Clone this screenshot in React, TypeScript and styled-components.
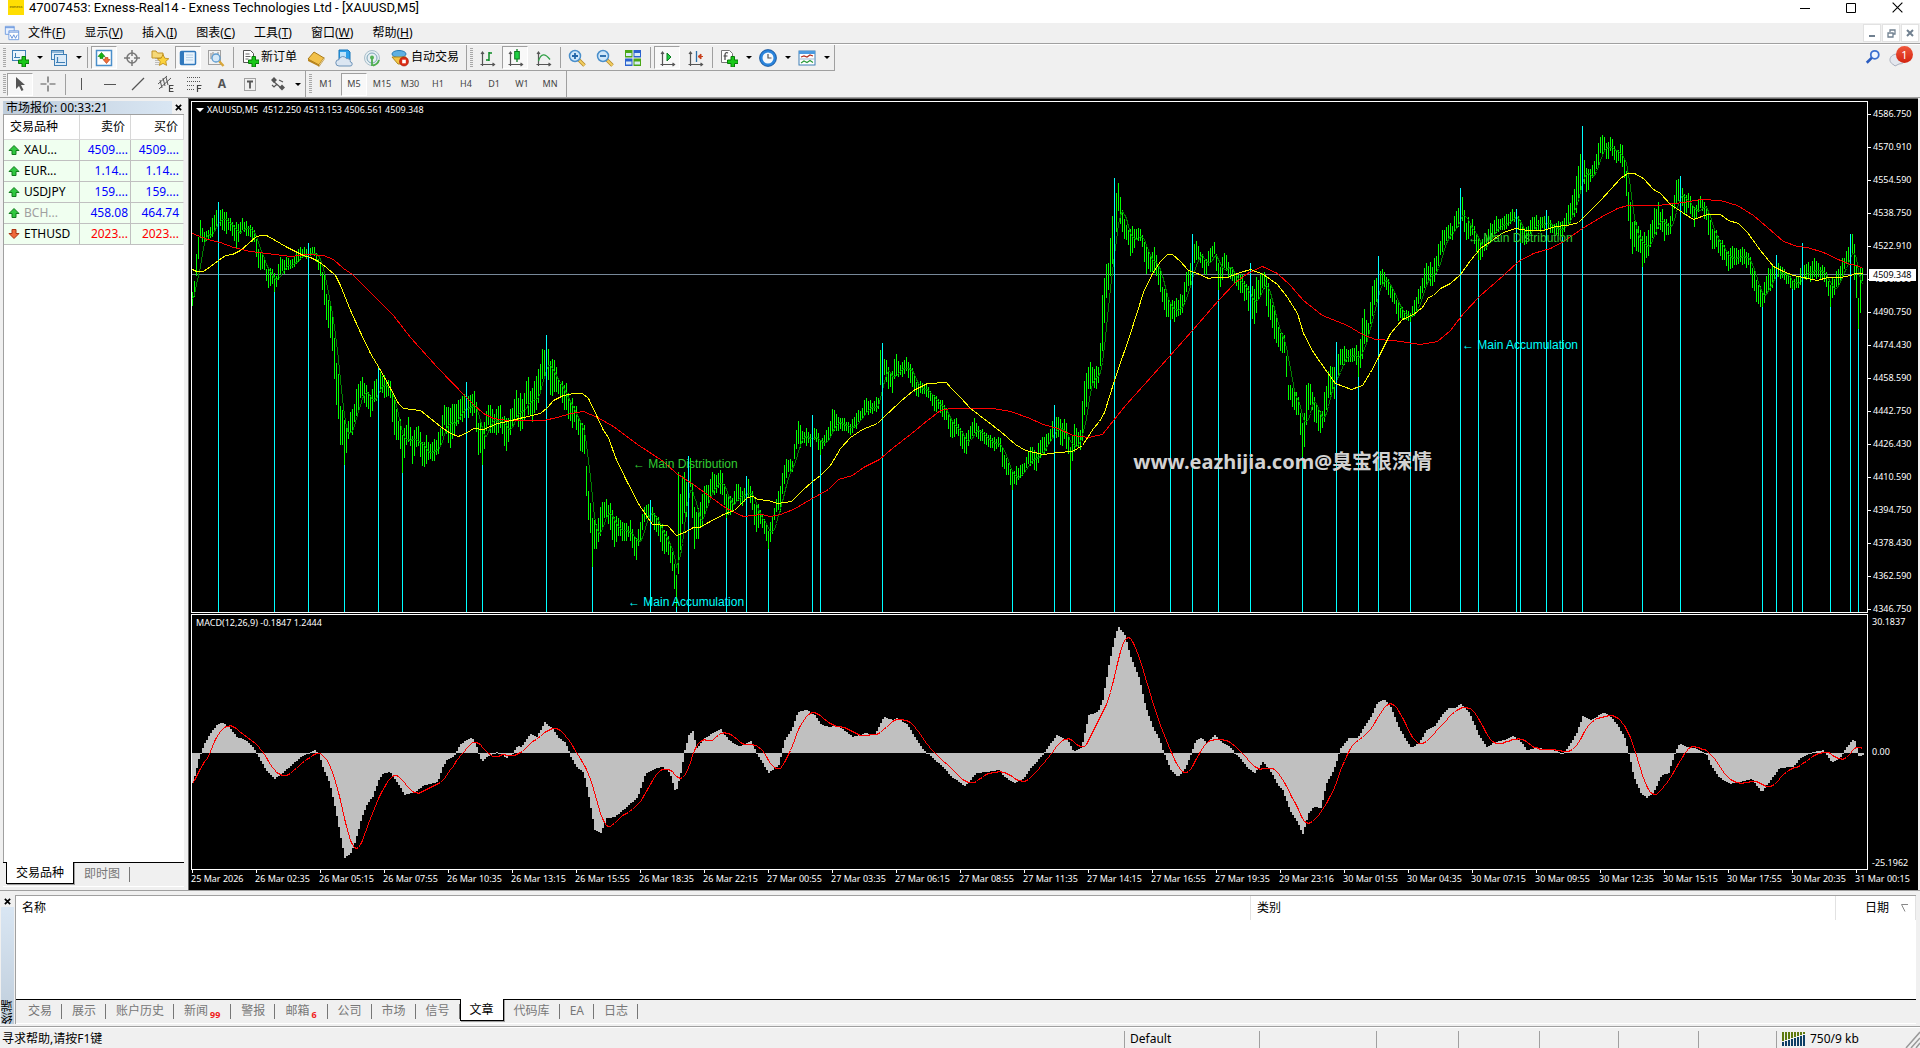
import React from 'react';
import styled, { createGlobalStyle, css } from 'styled-components';

const GlobalStyle = createGlobalStyle`
  *, *::before, *::after { box-sizing: border-box; }
  body { margin: 0; background: #f0f0f0; }
  button { font: inherit; color: inherit; background: none; border: 0; padding: 0; margin: 0; cursor: default; }
  ul, ol { list-style: none; margin: 0; padding: 0; }
  svg { display: block; }
`;

const UI_FONT = '"Noto Sans", "Noto Sans CJK SC", sans-serif';

/* ---------- chart data ---------- */

type Point = [number, number];
type Range = [number, number, number];

const parse = (size: number) => (text: string): number[][] => {
  const n = text.trim().split(/[\s,]+/).map(Number);
  const rows: number[][] = [];
  for (let i = 0; i < n.length; i += size) rows.push(n.slice(i, i + size));
  return rows;
};
const points = (t: string) => parse(2)(t) as Point[];
const ranges = (t: string) => parse(3)(t) as Range[];

const PRICE_RANGES = ranges(`
193,292,304 196,250,277 200,219,243 204,230,242 209,230,238 214,212,237 218,202,225 224,210,237 230,215,232 236,223,247
241,218,230 247,222,235 254,229,242 258,247,268 264,255,272 267,270,290 272,265,285 276,275,285 280,255,275 286,258,272
293,257,268 298,248,260 303,247,257 308,250,260 311,246,255 315,248,257 320,262,278 324,273,308 328,295,335 332,308,358
336,355,418 340,395,448 344,418,465 348,413,442 353,408,433 357,380,410 362,373,400 367,388,412 371,393,420 375,375,402
379,367,393 385,375,397 390,380,403 394,400,437 398,413,447 402,422,473 408,417,443 412,427,462 418,422,447 422,432,469
428,437,460 433,442,465 440,423,450 444,400,428 450,407,450 456,398,425 461,398,422 466,393,418 470,393,417 474,392,415
478,412,453 482,427,465 487,403,427 493,407,437 500,405,432 506,417,457 511,408,433 516,390,422 522,392,440 526,373,407
530,380,422 535,380,423 540,355,395 544,342,377 546,335,375 550,357,395 554,357,402 560,382,398 566,378,415 570,397,425
576,402,428 579,412,447 584,417,457 587,477,522 591,507,548 593,513,567 597,517,543 602,500,530 605,493,520 610,503,530
614,517,547 619,517,540 625,522,540 631,520,543 635,533,567 640,517,540 645,503,520 650,503,520 655,513,532 662,520,552
668,535,555 672,543,577 676,567,607 678,470,593 682,467,527 686,473,517 690,457,490 694,507,553 698,507,540 702,490,527
706,483,507 712,472,497 718,472,488 722,468,497 726,493,518 732,497,512 737,482,503 742,490,507 747,478,497 752,487,513
755,500,533 760,508,525 764,515,532 768,530,549 771,517,540 775,500,517 780,485,510 783,463,493 787,457,473 792,460,473
795,427,460 798,417,450 803,430,445 808,428,447 812,433,445 815,427,440 820,437,455 827,428,442 833,405,432 838,418,430
844,418,430 850,422,433 856,412,427 862,407,418 865,398,413 872,402,413 878,393,413 880,347,390 882,343,383 885,357,377
889,370,390 892,368,392 895,348,377 900,363,377 906,357,372 911,365,387 916,378,400 921,383,393 927,383,398 933,392,410
940,397,412 946,405,423 951,420,438 956,417,433 962,430,450 966,433,457 970,425,440 974,418,433 980,428,440 987,432,445
993,437,450 999,437,447 1003,445,473 1008,463,477 1012,470,490 1017,465,483 1023,465,473 1029,445,463 1036,450,472
1041,433,457 1047,433,448 1052,418,440 1056,412,437 1060,417,443 1065,413,447 1070,442,470 1075,420,447 1080,430,455
1083,380,433 1086,368,407 1089,354,387 1094,368,392 1099,363,382 1102,293,350 1105,262,313 1108,260,293 1111,223,273
1114,187,247 1118,183,217 1122,210,238 1126,220,240 1130,228,255 1136,225,243 1141,230,240 1145,245,273 1150,248,273
1156,248,277 1161,277,300 1165,292,320 1170,300,317 1176,297,322 1182,293,313 1186,270,293 1191,262,283 1194,237,267
1199,247,260 1205,260,278 1209,245,265 1214,240,257 1219,267,290 1224,247,273 1230,265,278 1237,273,287 1243,273,297
1248,287,310 1253,283,333 1258,273,303 1263,267,283 1268,283,320 1274,307,340 1278,327,350 1284,332,357 1288,380,400
1294,387,410 1298,397,417 1303,427,457 1307,367,417 1310,377,413 1315,397,423 1321,413,437 1326,377,410 1331,363,390
1335,357,400 1340,345,367 1347,347,363 1354,347,360 1359,343,377 1363,297,357 1368,320,337 1372,283,317 1377,273,297
1381,267,283 1387,278,293 1393,287,303 1398,303,320 1404,310,318 1410,312,322 1416,293,313 1421,282,300 1426,260,283
1431,263,287 1436,253,277 1440,235,260 1446,223,243 1452,223,238 1457,207,228 1461,188,222 1465,217,243 1472,220,237
1478,237,260 1484,237,253 1490,222,242 1495,217,237 1503,215,230 1511,209,223 1516,210,223 1521,223,243 1527,227,245
1532,213,230 1540,218,230 1546,212,228 1552,222,233 1562,222,237 1568,200,227 1573,195,217 1578,160,207 1580,142,190
1583,150,180 1586,160,200 1590,167,180 1596,153,170 1600,133,157 1603,133,153 1607,143,162 1610,132,153 1616,148,163
1622,140,167 1626,167,200 1629,193,230 1632,220,258 1637,213,248 1642,233,267 1648,230,255 1653,208,240 1658,203,230
1664,213,242 1669,220,237 1673,193,217 1677,177,200 1680,180,207 1684,193,213 1689,193,210 1694,207,227 1700,192,210
1706,203,222 1711,220,252 1716,230,247 1722,240,262 1728,247,270 1734,247,265 1741,247,263 1748,253,267 1751,260,283
1756,280,303 1762,288,307 1768,267,293 1774,267,283 1779,262,277 1786,270,282 1792,278,289 1798,277,288 1802,260,280
1808,263,280 1814,257,283 1820,265,277 1825,265,283 1830,283,307 1835,273,290 1840,263,283 1844,253,273 1850,235,260
1852,233,257 1856,257,300 1858,293,327 1860,267,313 1862,267,280`);

const SLOW_MA = points(`
192,233 207,239 220,242 233,247 250,251 267,253 290,256 307,254 323,255 333,259 343,268 352,274 370,292 393,315 410,337
437,367 466,397 473,404 483,413 493,418 507,420 543,420 557,417 570,413 583,411 597,417 613,426 637,444 663,461 676,473
693,484 708,495 726,508 743,516 761,514 770,516 780,514 793,509 810,499 828,489 838,479 852,475 863,467 879,459 893,447
910,434 927,420 940,410 950,408 993,408 1010,411 1027,417 1043,424 1057,428 1073,435 1088,437 1102,434 1113,420 1125,405
1152,375 1192,330 1218,300 1235,282 1247,273 1262,266 1277,273 1290,285 1303,300 1322,315 1347,325 1362,334 1375,339
1393,340 1420,344 1437,341 1450,330 1463,313 1480,295 1503,275 1518,261 1533,253 1550,248 1563,241 1582,228 1600,217
1617,208 1627,205 1657,205 1683,202 1700,199 1720,200 1737,205 1753,215 1767,227 1783,241 1797,246 1807,247 1823,252
1840,260 1850,264 1857,265 1862,268`);

const MID_MA = points(`
192,269 196,271 203,271 210,266 218,260 225,255 232,254 240,250 248,243 256,236 262,235 266,235 275,240 285,246 293,250
303,255 310,257 318,261 326,267 335,275 340,285 350,310 360,332 370,353 379,368 390,388 398,403 403,408 420,410 430,418
440,426 450,433 458,436 467,432 473,428 483,429 497,423 507,421 523,417 540,413 547,407 553,400 563,395 573,393 582,393
588,398 597,417 603,430 608,437 615,457 626,480 639,505 652,524 667,525 676,535 684,532 693,527 699,527 708,522 723,514
734,510 741,503 747,497 753,496 757,499 768,500 777,503 791,501 802,490 812,481 820,475 830,465 840,448 850,437 862,429
877,423 883,417 900,401 913,390 927,383 946,382 950,387 960,397 970,408 987,421 1000,431 1015,444 1025,450 1043,454
1057,452 1072,451 1082,445 1093,428 1099,421 1104,412 1115,377 1130,333 1143,292 1152,273 1160,261 1167,254 1172,254
1180,261 1188,270 1197,273 1208,278 1213,277 1227,277 1240,272 1250,269 1263,274 1277,284 1287,297 1297,313 1303,333
1313,352 1327,372 1335,383 1351,389 1362,385 1370,372 1378,357 1390,333 1402,319 1413,314 1422,307 1428,297 1433,295
1440,288 1450,283 1460,274 1470,260 1480,248 1493,239 1503,232 1515,228 1527,230 1543,230 1555,226 1567,225 1578,222
1588,212 1600,200 1610,189 1620,178 1627,173 1634,173 1643,178 1653,189 1660,193 1670,204 1682,212 1693,219 1707,214
1720,214 1728,220 1738,223 1747,232 1760,250 1773,266 1783,271 1793,275 1817,280 1827,277 1840,277 1850,275 1855,273
1862,273`);

const SIGNAL_STEMS = points(`
218,202 274,292 308,243 344,465 378,367 402,473 466,382 482,465 546,335 592,567 650,500 676,607 688,456 726,518 746,476
768,549 812,415 820,455 882,343 1012,490 1054,405 1070,470 1114,178 1170,320 1192,234 1218,290 1250,263 1302,457 1336,342
1358,377 1378,256 1410,322 1460,188 1478,260 1516,209 1520,243 1546,210 1562,237 1582,126 1642,267 1680,176 1762,307
1776,255 1792,289 1802,243 1830,307 1850,234 1858,329`);

const MACD = points(`
192,783 196,768 199,755 203,745 207,738 211,731 217,724 221,722 229,728 236,737 245,740 252,747 258,757 265,770 274,779
283,772 291,765 300,757 309,752 314,750 318,753 322,767 329,783 335,810 341,843 344,858 350,853 355,840 361,817 367,803
372,797 378,780 382,774 389,772 395,780 404,795 414,792 422,786 437,782 442,767 446,760 453,757 459,745 466,740 471,737
476,747 481,762 486,757 497,752 506,758 512,753 517,745 521,747 529,734 536,737 544,722 552,729 558,738 565,743 570,757
576,767 583,773 588,797 594,830 600,833 606,818 614,817 626,807 637,797 645,773 656,768 662,767 669,773 675,793 680,773
684,750 688,735 692,731 696,748 704,738 712,733 720,729 728,740 739,747 750,741 758,757 768,773 778,765 784,740 791,730
797,712 806,710 814,715 821,725 830,727 834,725 843,730 852,737 865,733 874,735 883,717 892,720 897,718 907,725 914,737
923,750 931,757 942,767 951,777 964,786 976,773 987,772 998,770 1004,777 1013,783 1023,778 1031,767 1042,755 1051,742
1056,735 1067,740 1073,752 1081,747 1088,715 1097,712 1102,700 1108,665 1115,633 1118,627 1124,635 1130,657 1139,680
1145,707 1152,727 1159,740 1163,753 1170,770 1177,777 1185,768 1191,752 1195,740 1201,738 1206,743 1214,735 1222,743
1229,747 1238,757 1247,768 1254,773 1262,762 1271,773 1277,785 1282,790 1289,810 1297,823 1302,834 1308,813 1313,807
1320,808 1326,783 1333,770 1340,748 1348,738 1357,738 1363,727 1370,717 1377,702 1383,699 1390,707 1398,727 1404,738
1411,748 1419,742 1426,730 1433,727 1441,715 1448,708 1454,708 1460,704 1468,712 1473,723 1479,737 1486,747 1494,742
1503,740 1513,736 1521,743 1526,750 1536,748 1547,749 1558,752 1562,754 1569,745 1576,733 1582,716 1591,720 1603,712
1611,718 1618,727 1624,738 1629,757 1633,777 1640,793 1646,798 1653,792 1661,775 1668,773 1674,753 1679,743 1686,747
1695,748 1705,753 1710,765 1718,777 1729,784 1740,782 1751,779 1761,792 1770,780 1779,768 1792,767 1801,757 1812,752
1823,750 1831,762 1839,759 1845,748 1852,740 1855,742 1858,756 1863,755`);

const noise = (i: number, salt: number) => {
  const v = Math.sin(i * 12.9898 + salt * 78.233) * 43758.5453;
  return v - Math.floor(v);
};

const sample = (rows: number[][], x: number, col: number) => {
  if (x <= rows[0][0]) return rows[0][col];
  for (let i = 1; i < rows.length; i++) {
    if (x <= rows[i][0]) {
      const a = rows[i - 1];
      const b = rows[i];
      return a[col] + ((b[col] - a[col]) * (x - a[0])) / (b[0] - a[0]);
    }
  }
  return rows[rows.length - 1][col];
};

const BAR_XS = Array.from({ length: 836 }, (_, i) => 192 + i * 2);
const STEM_TOPS = new Map(SIGNAL_STEMS);

const bars = BAR_XS.map((x, i) => {
  const hi = sample(PRICE_RANGES, x, 1);
  const lo = sample(PRICE_RANGES, x, 2);
  const span = lo - hi;
  const top = Math.round(hi - 1 + noise(i, 1) * span * 0.3);
  const low = Math.round(lo + 2 - noise(i, 2) * span * 0.3);
  return { x, top, bottom: Math.max(low, STEM_TOPS.get(x) ?? 0) };
});

const barsPath = bars.map(b => `M${b.x + 0.5} ${b.top}V${b.bottom}`).join('');
const fastLine = bars
  .map((b, i) => {
    const from = Math.max(0, i - 4);
    const part = bars.slice(from, i + 1);
    const avg = part.reduce((s, p) => s + (p.top + p.bottom) / 2, 0) / part.length;
    return `${b.x + 0.5},${Math.round(avg) + 0.5}`;
  })
  .join(' ');

const ZERO_Y = 753;
const macdValues = BAR_XS.map(x => Math.round(sample(MACD, x, 1)));
const macdPath = BAR_XS.map((x, i) => `M${x} ${ZERO_Y}h2V${macdValues[i] === ZERO_Y ? ZERO_Y + 1 : macdValues[i]}h-2z`).join('');
const macdSignal = BAR_XS.map((x, i) => {
  const part = macdValues.slice(Math.max(0, i - 8), i + 1);
  return `${x + 0.5},${Math.round(part.reduce((s, v) => s + v, 0) / part.length) + 0.5}`;
}).join(' ');

const toPolyline = (list: Point[]) => list.map(([x, y]) => `${x + 0.5},${y + 0.5}`).join(' ');

const PRICES = ['4586.750', '4570.910', '4554.590', '4538.750', '4522.910', '4506.590', '4490.750', '4474.430',
  '4458.590', '4442.750', '4426.430', '4410.590', '4394.750', '4378.430', '4362.590', '4346.750'];
const TIMES = ['25 Mar 2026', '26 Mar 02:35', '26 Mar 05:15', '26 Mar 07:55', '26 Mar 10:35', '26 Mar 13:15',
  '26 Mar 15:55', '26 Mar 18:35', '26 Mar 22:15', '27 Mar 00:55', '27 Mar 03:35', '27 Mar 06:15', '27 Mar 08:55',
  '27 Mar 11:35', '27 Mar 14:15', '27 Mar 16:55', '27 Mar 19:35', '29 Mar 23:16', '30 Mar 01:55', '30 Mar 04:35',
  '30 Mar 07:15', '30 Mar 09:55', '30 Mar 12:35', '30 Mar 15:15', '30 Mar 17:55', '30 Mar 20:35', '31 Mar 00:15'];

/* ---------- icons ---------- */

const Svg = ({ s = 18, children }: { s?: number; children: React.ReactNode }) => (
  <svg width={s} height={s} viewBox="0 0 18 18" fill="none" aria-hidden="true">{children}</svg>
);
const Plus = () => <path d="M11 7.500h3.500v3.500h3.500v3.500h-3.500v3.500h-3.500v-3.500h-3.500v-3.500h3.500z" fill="#18c818" stroke="#0a7a0a" />;
const Axes = () => (
  <path d="M4.500 3v14M2.500 15.500h14M3 5l1.500-2L6 5M14.500 14l2 1.500-2 1.500" stroke="#555" strokeWidth="1.200" />
);
const Lens = ({ sign }: { sign: string }) => (
  <>
    <path d="M10.500 10.500l6 6" stroke="#b5892a" strokeWidth="3.500" />
    <path d="M10.500 10.500l6 6" stroke="#f3cf62" strokeWidth="1.800" />
    <circle cx="7" cy="7" r="5.500" fill="#cfe7fa" stroke="#4a8fcb" strokeWidth="1.500" />
    <path d={sign} stroke="#2266a8" strokeWidth="1.800" />
  </>
);

const icons = {
  newChart: (
    <Svg><rect x="1.500" y="1.500" width="13" height="10" fill="#eaf4fc" stroke="#3f7fb5" /><path d="M4.500 4v5M3 8.500h6" stroke="#3f7fb5" /><Plus /></Svg>
  ),
  profiles: (
    <Svg><rect x="1.500" y="1.500" width="12" height="9" fill="#e3f0fb" stroke="#3f7fb5" /><rect x="4.500" y="5.500" width="12" height="11" fill="#dcebf8" stroke="#3f7fb5" /><path d="M1.500 3h12M7.500 8v6M6 13.500h9" stroke="#3f7fb5" strokeWidth="1.200" /></Svg>
  ),
  market: (
    <Svg><rect x="1.500" y="1.500" width="15" height="15" fill="#fff" stroke="#4a8fcb" strokeWidth="1.500" /><path d="M6.500 3.500l3.500 4h-2v2h-3v-2h-2z" fill="#16b316" stroke="#0a7a0a" strokeWidth=".6" /><path d="M11.500 14.500l3.500-4h-2v-2h-3v2h-2z" fill="#f0703a" stroke="#b53a12" strokeWidth=".6" /></Svg>
  ),
  crosshair: (
    <Svg><circle cx="9" cy="9" r="5" stroke="#777" strokeWidth="1.500" /><path d="M9 1v6M9 11v6M1 9h6M11 9h6" stroke="#777" strokeWidth="1.500" /></Svg>
  ),
  navigator: (
    <Svg><path d="M1 2h4l1.500 2H12v5H1z" fill="#f6d978" stroke="#c09226" /><path d="M5 9v8M7 9v8" stroke="#8a8a8a" strokeDasharray="1 1" /><path d="M12 5.500l1.800 3.700 4 .5-3 2.700.8 4-3.600-2-3.600 2 .8-4-3-2.700 4-.5z" fill="#fbd23c" stroke="#b98613" strokeWidth=".8" /></Svg>
  ),
  terminal: (
    <Svg><rect x="1.500" y="2.500" width="15" height="13" rx="1" fill="#e8f3fc" stroke="#2f78bd" strokeWidth="1.500" /><path d="M3.500 3v12" stroke="#2f78bd" strokeWidth="3" /><path d="M7 6h7M7 8.500h7M7 11h7" stroke="#a9c6df" strokeWidth=".8" /></Svg>
  ),
  tester: (
    <Svg><rect x="1.500" y="1.500" width="12" height="14" fill="#f2f2f2" stroke="#a0a0a0" /><path d="M4 4v6M6 3v5M11 3v4" stroke="#888" /><path d="M12 12l4.500 5" stroke="#d9a73a" strokeWidth="2.500" /><circle cx="9" cy="9" r="4" fill="#d5e8f7" stroke="#5c9bd0" strokeWidth="1.300" /></Svg>
  ),
  order: (
    <Svg><path d="M2.500 1.500h7l3 3v9h-10z" fill="#fff" stroke="#555" /><path d="M4.500 5h4M4.500 7.500h5M4.500 10h3" stroke="#666" /><Plus /></Svg>
  ),
  book: (
    <Svg><path d="M1 10l6-7 10 6-5 7z" fill="#f2c14a" stroke="#a97a18" /><path d="M1 10l11 6v1.500L1 12z" fill="#b9831a" /><path d="M12 15.500l5-7v2l-5 7z" fill="#fff0c0" stroke="#a97a18" strokeWidth=".6" /></Svg>
  ),
  cloud: (
    <Svg><path d="M4 1h9l2 2v8H4z" fill="#2da0ea" stroke="#1674b8" /><path d="M5 3h6v5H5z" fill="#bfe3fa" /><path d="M4 17a3.200 3.200 0 010-6.400 4 4 0 017.400-1 3.200 3.200 0 014 3.400 2 2 0 01-.4 4z" fill="#dbe6f2" stroke="#6d93b8" /></Svg>
  ),
  signal: (
    <Svg><circle cx="9" cy="9" r="7.500" fill="#e6eef2" stroke="#a9bfcb" /><circle cx="9" cy="9" r="5" stroke="#7da5b8" /><circle cx="9" cy="8.500" r="2" fill="#53b153" /><path d="M9 9v8M10 16.500a8 8 0 006-5.500" stroke="#4fae4f" strokeWidth="1.800" /></Svg>
  ),
  auto: (
    <Svg><ellipse cx="8" cy="5" rx="7" ry="3.500" fill="#5fb0e2" stroke="#2a7db5" /><path d="M1 8h14l-3 7H7z" fill="#f3c545" stroke="#b08a1c" /><circle cx="13" cy="12.500" r="4.500" fill="#dd2c14" stroke="#9c1a0a" strokeWidth=".6" /><rect x="11.200" y="10.700" width="3.600" height="3.600" fill="#fff" /></Svg>
  ),
  barChart: <Svg><Axes /><path d="M11 3v9M11 4h3M8 11h3" stroke="#0b8a24" strokeWidth="1.500" /></Svg>,
  candles: <Svg><Axes /><path d="M11 0v13" stroke="#0a7a1e" strokeWidth="1.300" /><rect x="8.700" y="2.500" width="4.600" height="7.500" fill="#1fd043" stroke="#0a7a1e" /></Svg>,
  lineChart: <Svg><Axes /><path d="M4.500 12C7 4 11 4 16 10.500" stroke="#2fa046" strokeWidth="1.300" /></Svg>,
  zoomIn: <Svg><Lens sign="M7 4v6M4 7h6" /></Svg>,
  zoomOut: <Svg><Lens sign="M4 7h6" /></Svg>,
  tiles: (
    <Svg><path d="M1 1h7.500v7.500H1z" fill="#4aa818" /><path d="M9.500 1H17v7.500H9.500z" fill="#2b62cf" /><path d="M1 9.500h7.500V17H1z" fill="#2b62cf" /><path d="M9.500 9.500H17V17H9.500z" fill="#4aa818" /><path d="M2 4h5.500v3H2zM10.500 4H16v3h-5.500zM2 12.500h5.500v3H2zM10.500 12.500H16v3h-5.500z" fill="#dcecf8" /></Svg>
  ),
  autoScroll: <Svg><Axes /><path d="M9 4v8l4-4z" fill="#1fd043" stroke="#0a7a1e" /></Svg>,
  shift: <Svg><Axes /><path d="M10.500 2v11" stroke="#2a6fa8" strokeWidth="1.300" /><path d="M12 7.500l3-2.500v5zM14 7.500h3" fill="#c8401c" stroke="#c8401c" /></Svg>,
  indicators: (
    <Svg><path d="M1.500 1.500h8l3 3v9h-11z" fill="#fff" stroke="#777" /><path d="M8 4c-2-1-3 0-3 2v5M3.500 7h4" stroke="#444" strokeWidth="1.200" /><Plus /></Svg>
  ),
  clock: (
    <Svg><circle cx="9" cy="9" r="7" fill="#f4f8fc" stroke="#2a84dc" strokeWidth="3" /><circle cx="9" cy="9" r="8.400" stroke="#0f4d96" strokeWidth=".8" /><path d="M9 5v4h3.500" stroke="#555" strokeWidth="1.200" /></Svg>
  ),
  templates: (
    <Svg><rect x="1" y="2" width="16" height="14" fill="#fff" stroke="#3f7fb5" /><path d="M1 3.500h16" stroke="#4a9ae0" strokeWidth="3" /><path d="M1 10h16" stroke="#9bb9d3" /><path d="M3 8l3-1 3 1 3-2 3 1" stroke="#b03020" strokeWidth="1.200" /><path d="M3 14l3-2 3 1.500 3-2 3 2" stroke="#2a9a3a" strokeWidth="1.200" /></Svg>
  ),
  cursor: <Svg><path d="M5 2v12l3-3 2.500 5 2-1-2.500-5h4z" fill="#555" /></Svg>,
  cross: <Svg><path d="M9 1.500v6M9 10.500v6M1.500 9h6M10.500 9h6" stroke="#555" strokeWidth="1.200" /></Svg>,
  vline: <Svg><path d="M8.500 3v12" stroke="#555" /></Svg>,
  hline: <Svg><path d="M3 9.500h12" stroke="#555" /></Svg>,
  trend: <Svg><path d="M3 15L15 3" stroke="#555" strokeWidth="1.200" /></Svg>,
  channel: (
    <Svg><path d="M1 9L10 1M2 14L14 3M3 5l2 8M6 3l2 8M9 2l2 8" stroke="#555" /><path d="M16.500 10.500h-4v6h4M12.500 13.500h3.500" stroke="#444" strokeWidth="1.200" /></Svg>
  ),
  fibo: (
    <Svg><path d="M2 2.500h13M2 6.500h13M2 10.500h8M2 14.500h8" stroke="#555" strokeDasharray="1 1" /><path d="M16.500 10.500h-4v6.500M12.500 13.500h3.500" stroke="#444" strokeWidth="1.200" /></Svg>
  ),
  labelTool: (
    <Svg><rect x="3.500" y="3.500" width="11" height="12" stroke="#555" strokeDasharray="1 1" /><path d="M6 6.500h6M9 6.500v7" stroke="#555" strokeWidth="1.800" /></Svg>
  ),
  shapes: (
    <Svg><path d="M5 2l3 3-3 3-3-3zM13 9.500l3 3-3 3-3-3z" fill="#555" /><path d="M4 6l7 6M3 10l2 2 3-3M10 5l4 2" stroke="#555" strokeWidth="1.200" /></Svg>
  ),
  search: <Svg s={16}><circle cx="11" cy="6.500" r="4.500" fill="#eef4ff" stroke="#3c6fd0" strokeWidth="2" /><path d="M7.500 10L2 15.500" stroke="#2a5cc0" strokeWidth="3" /></Svg>,
  doc: (
    <Svg s={16}><path d="M1.500 1.500h10v9h-10z" fill="#e8f1ff" stroke="#6c9be0" /><path d="M5.500 6.500h11v10h-11z" fill="#fff" stroke="#6c9be0" /><path d="M1.500 3h10M5.500 8h11M7 11l2 4 2-4 2 4 2-4" stroke="#5a8ad6" /></Svg>
  ),
};

type IconName = keyof typeof icons;

/* ---------- frame ---------- */

const Shell = styled.div`
  display: flex;
  flex-direction: column;
  height: 100vh;
  min-height: 600px;
  overflow: hidden;
  background: #f0f0f0;
  color: #000;
  font: 12px/16px ${UI_FONT};
`;

const TitleBar = styled.header`
  display: flex;
  align-items: flex-start;
  height: 23px;
  padding-left: 8px;
  background: #fff;
`;
const Brand = styled.span`
  width: 16px;
  height: 15px;
  background: #ffde02;
  color: #4d4300;
  font-size: 4px;
  line-height: 14px;
  text-align: center;
`;
const Title = styled.h1`
  flex: 1;
  margin: 0 0 0 5px;
  font: 400 13px/16px Roboto, "Noto Sans CJK SC", sans-serif;
`;
const WindowButton = styled.button`
  display: grid;
  place-items: center;
  width: 46px;
  height: 15px;
`;

const MenuBar = styled.nav`
  display: flex;
  align-items: center;
  height: 21px;
  padding-left: 4px;
  border-bottom: 1px solid #a0a0a0;
`;
const MenuItem = styled.button`
  padding: 0 11px 0 8px;
  line-height: 18px;
`;
const Spacer = styled.div`flex: 1;`;
const MdiButton = styled.button`
  display: grid;
  place-items: center;
  width: 18px;
  height: 18px;
  margin-right: 1px;
  background: #fff;
  border: 1px solid #e2e2e2;
`;

const ToolbarArea = styled.div`
  position: relative;
  border-top: 1px solid #fff;
  border-bottom: 1px solid #a0a0a0;
`;
const ToolRow = styled.div`display: flex;`;
const ToolGroup = styled.div<{ $flat?: boolean }>`
  display: flex;
  align-items: center;
  height: 26px;
  padding: 0 2px 0 3px;
  border-right: 1px solid #a0a0a0;
  ${p => !p.$flat && css`border-bottom: 1px solid #a0a0a0;`}
`;
const Grip = styled.span`
  width: 3px;
  height: 20px;
  background: repeating-linear-gradient(#a8a8a8 0 1px, #f0f0f0 1px 2px);
`;
const ToolSeparator = styled.span`
  width: 1px;
  height: 21px;
  margin: 0 2px 0 3px;
  background: #a0a0a0;
`;
const ToolButton = styled.button<{ $pressed?: boolean }>`
  display: flex;
  align-items: center;
  justify-content: center;
  min-width: 26px;
  height: 23px;
  margin: 0 1px;
  border: 1px solid transparent;
  ${p => p.$pressed && css`
    border-color: #a0a0a0 #fff #fff #a0a0a0;
    background: #f8f8f8;
  `}
`;
const WideToolButton = styled(ToolButton)`
  gap: 2px;
  padding: 0 3px;
`;
const LetterTool = styled(ToolButton)`
  color: #555;
  font-weight: 700;
`;
const ToolLabel = styled.span`
  margin-bottom: 2px;
  line-height: 18px;
`;
const Drop = styled.button`
  display: grid;
  place-items: center;
  width: 11px;
  height: 23px;
  &::after {
    content: '';
    border: 3px solid transparent;
    border-top-color: #000;
    border-bottom: 0;
  }
`;
const Timeframe = styled(ToolButton)`
  color: #444;
  font-size: 9px;
`;
const Corner = styled.div`
  position: absolute;
  top: 1px;
  right: 7px;
  display: flex;
  align-items: center;
  gap: 8px;
`;
const AlertButton = styled.button`
  position: relative;
  width: 24px;
  height: 22px;
`;
const AlertBadge = styled.span`
  position: absolute;
  top: 0;
  right: 0;
  width: 17px;
  height: 17px;
  border-radius: 50%;
  background: linear-gradient(#f0583c, #d42410);
  color: #fff;
  font-size: 11px;
  line-height: 17px;
  text-align: center;
`;

/* ---------- market watch ---------- */

const Workspace = styled.main`
  display: flex;
  flex: 1;
  min-height: 0;
`;
const Dock = styled.aside`
  display: flex;
  flex-direction: column;
  width: 188px;
  padding: 2px 4px 3px 3px;
`;
const DockHeader = styled.div`
  display: flex;
  align-items: center;
  height: 14px;
`;
const DockTitle = styled.h2`
  flex: 1;
  margin: 0;
  padding-left: 3px;
  background: linear-gradient(90deg, #bfcddb, #d9e6f3);
  font-size: 12px;
  line-height: 13px;
  font-weight: 400;
`;
const CloseButton = styled.button`
  display: grid;
  place-items: center;
  width: 12px;
  height: 12px;
`;
const DockBody = styled.div`
  flex: 1;
  min-height: 0;
  background: #fff;
  border: solid #a0a0a0;
  border-width: 1px 0 0 1px;
`;
const Quotes = styled.table`
  width: 100%;
  table-layout: fixed;
  border-collapse: separate;
  border-spacing: 0;
`;
const QuoteHead = styled.th<{ $right?: boolean }>`
  height: 25px;
  padding: 0 5px 1px 6px;
  border: solid #d8d8d8;
  border-width: 0 1px 1px 0;
  font-weight: 400;
  text-align: ${p => (p.$right ? 'right' : 'left')};
`;
const QuoteCell = styled.td<{ $tone: string }>`
  height: 21px;
  padding: 0 2px 1px 4px;
  background: #f0fff0;
  border: solid #c0c0c0;
  border-width: 0 1px 1px 0;
  color: ${p => p.$tone};
  text-align: right;
  &:first-child { text-align: left; }
  &:last-child { padding-right: 4px; border-right-color: #f0f0f0; }
`;
const SymbolName = styled.span`
  display: flex;
  align-items: center;
  gap: 4px;
`;

const TabStrip = styled.div<{ $inset?: boolean }>`
  display: flex;
  height: 25px;
  padding-left: ${p => (p.$inset ? 3 : 2)}px;
  border-top: 1px solid #000;
  border-bottom: 1px solid #fff;
`;
const Tab = styled.button<{ $active?: boolean }>`
  position: relative;
  display: flex;
  align-items: center;
  height: 21px;
  padding: 0 10px;
  color: #777;
  &::after {
    content: '';
    position: absolute;
    top: 4px;
    right: 0;
    width: 1px;
    height: 15px;
    background: #777;
  }
  ${p => p.$active && css`
    margin-top: -1px;
    height: 22px;
    padding: 0 9px;
    background: #fff;
    color: #000;
    border: solid #000;
    border-width: 0 1px 1px;
    box-shadow: 1px 1px 0 #a0a0a0;
    &::after { display: none; }
  `}
`;
const Counter = styled.sub`
  align-self: flex-end;
  margin: 0 1px 0 2px;
  color: #f02020;
  font: 700 9px/13px ${UI_FONT};
`;

/* ---------- chart ---------- */

const ChartWindow = styled.section`
  flex: 1;
  min-width: 0;
  display: flex;
  padding: 2px 0 0 2px;
  margin-right: 2px;
  border: solid #696969;
  border-width: 1px 0 0 1px;
  background: #000;
  color: #fff;
  font: 9px/14px ${UI_FONT};
`;
const Plots = styled.div`
  flex: 1;
  min-width: 0;
  display: flex;
  flex-direction: column;
`;
const Pane = styled.div<{ $grow: number }>`
  position: relative;
  flex: ${p => p.$grow} 1 0;
  min-height: 0;
  display: grid;
  grid-template: minmax(0, 1fr) / minmax(0, 1fr);
  margin-bottom: ${p => (p.$grow > 300 ? 1 : 0)}px;
  border: 1px solid #fff;
  svg { width: 100%; height: 100%; shape-rendering: crispEdges; }
`;
const PaneCaption = styled.div`
  position: absolute;
  top: 1px;
  left: 4px;
  display: flex;
  align-items: center;
  gap: 3px;
  white-space: pre;
`;
const Triangle = styled.span`
  border: 4px solid transparent;
  border-top-color: #fff;
  border-bottom: 0;
`;
const Note = styled.span<{ $x: number; $y: number; $tone: string }>`
  position: absolute;
  left: ${p => (p.$x / 1675) * 100}%;
  top: ${p => (p.$y / 510) * 100}%;
  color: ${p => p.$tone};
  font: 12px/14px "Liberation Sans", sans-serif;
  white-space: nowrap;
`;
const Watermark = styled.span`
  position: absolute;
  left: 56.2%;
  top: 68%;
  color: #d2d2d2;
  font: 700 20px/26px "Noto Sans", "Noto Sans CJK SC", sans-serif;
  white-space: nowrap;
`;
const TimeAxis = styled.ol`
  display: flex;
  height: 20px;
  li {
    position: relative;
    flex: 0 0 calc(100% * 64 / 1677);
    padding-top: 2px;
    white-space: nowrap;
  }
  li::before {
    content: '';
    position: absolute;
    top: 0;
    left: 1px;
    width: 1px;
    height: 3px;
    background: #fff;
  }
`;
const ValueAxis = styled.div`
  position: relative;
  display: flex;
  flex-direction: column;
  width: 50px;
  margin-top: -2px;
  padding-bottom: 20px;
`;
const PriceList = styled.ol`
  flex: 516 1 0;
  display: flex;
  flex-direction: column;
  min-height: 0;
  li {
    flex: 0 0 calc(100% * 33 / 516);
    line-height: 30px;
    padding-left: 5px;
    background: linear-gradient(#fff, #fff) 0 15px / 3px 1px no-repeat;
  }
`;
const MacdList = styled.ol`
  flex: 255 1 0;
  display: grid;
  grid-template-rows: 14px 30fr 14px 25fr 14px;
  padding-left: 4px;
  li:nth-child(2) { grid-row: 3; }
  li:nth-child(3) { grid-row: 5; }
`;
const LastPrice = styled.output`
  position: absolute;
  left: 1px;
  top: 21.500%;
  width: 47px;
  padding-left: 4px;
  background: #fff;
  color: #000;
  line-height: 12px;
`;

/* ---------- terminal ---------- */

const Terminal = styled.section`
  display: flex;
  height: 136px;
  padding: 4px 4px 2px 0;
  border-top: 1px solid #a0a0a0;
`;
const TerminalGutter = styled.div`
  display: flex;
  flex-direction: column;
  width: 15px;
  padding: 0 1px;
`;
const GutterTitle = styled.h2`
  flex: 1;
  margin: 0;
  background: linear-gradient(#bfcddb, #d9e6f3);
  font-size: 12px;
  line-height: 13px;
  font-weight: 400;
  writing-mode: vertical-rl;
  transform: rotate(180deg);
`;
const TerminalBody = styled.div`
  flex: 1;
  display: flex;
  flex-direction: column;
  border: solid #a0a0a0;
  border-width: 1px 0 0 1px;
`;
const Articles = styled.div`
  flex: 1;
  background: #fff;
`;
const ArticleTable = styled.table`
  width: 100%;
  table-layout: fixed;
  border-spacing: 0;
  th {
    height: 24px;
    padding: 0 6px;
    border-right: 1px solid #e2e2e2;
    font-weight: 400;
    text-align: left;
  }
  th:last-child { text-align: right; }
`;
const SortMark = styled.span`
  display: inline-block;
  margin: 0 0 0 12px;
`;

const StatusBar = styled.footer`
  display: flex;
  align-items: center;
  height: 22px;
  padding: 3px 0 0 2px;
  border-top: 1px solid #a0a0a0;
  box-shadow: inset 0 1px 0 #fff;
`;
const StatusCell = styled.div<{ $w: number }>`
  display: flex;
  align-items: center;
  gap: 4px;
  width: ${p => p.$w}px;
  height: 17px;
  padding-left: 5px;
  border-left: 1px solid #a0a0a0;
`;

/* ---------- parts ---------- */

const Tool = ({ name, label, pressed }: { name: IconName; label: string; pressed?: boolean }) => (
  <ToolButton type="button" aria-label={label} aria-pressed={pressed} $pressed={pressed}>{icons[name]}</ToolButton>
);
const SplitTool = ({ name, label }: { name: IconName; label: string }) => (
  <>
    <Tool name={name} label={label} />
    <Drop type="button" aria-label={`${label} ▾`} />
  </>
);

const SmallX = ({ size = 7, w = 2 }: { size?: number; w?: number }) => (
  <svg width={size} height={size} viewBox="0 0 8 8" aria-hidden="true"><path d="M1 1l6 6M7 1l-6 6" stroke="#000" strokeWidth={w} /></svg>
);

const Arrow = ({ up }: { up: boolean }) => (
  <svg width="12" height="12" viewBox="0 0 12 12" aria-hidden="true">
    {up
      ? <path d="M6 1.500L11 6.500H8V10.500H4V6.500H1z" fill="#2fc83f" stroke="#117a1c" />
      : <path d="M6 10.500L11 5.500H8V1.500H4V5.500H1z" fill="#f0693a" stroke="#a83412" />}
  </svg>
);

const MENUS: [string, string][] = [['文件', 'F'], ['显示', 'V'], ['插入', 'I'], ['图表', 'C'], ['工具', 'T'], ['窗口', 'W'], ['帮助', 'H']];

const QUOTES = [
  { name: 'XAU...', bid: '4509....', ask: '4509....', up: true, tone: '#0000ff' },
  { name: 'EUR...', bid: '1.14...', ask: '1.14...', up: true, tone: '#0000ff' },
  { name: 'USDJPY', bid: '159....', ask: '159....', up: true, tone: '#0000ff' },
  { name: 'BCH...', bid: '458.08', ask: '464.74', up: true, tone: '#0000ff', muted: true },
  { name: 'ETHUSD', bid: '2023...', ask: '2023...', up: false, tone: '#ff0000' },
];

const TERMINAL_TABS: { name: string; count?: string; active?: boolean }[] = [
  { name: '交易' }, { name: '展示' }, { name: '账户历史' }, { name: '新闻', count: '99' }, { name: '警报' },
  { name: '邮箱', count: '6' }, { name: '公司' }, { name: '市场' }, { name: '信号' }, { name: '文章', active: true },
  { name: '代码库' }, { name: 'EA' }, { name: '日志' },
];

const Toolbars = () => (
  <ToolbarArea>
    <ToolRow>
      <ToolGroup>
        <Grip />
        <SplitTool name="newChart" label="新图表" />
        <SplitTool name="profiles" label="图表组" />
        <ToolSeparator />
        <Tool name="market" label="市场报价" pressed />
        <Tool name="crosshair" label="数据窗口" />
        <Tool name="navigator" label="导航" />
        <Tool name="terminal" label="终端" pressed />
        <Tool name="tester" label="策略测试" />
        <ToolSeparator />
        <WideToolButton type="button">{icons.order}<ToolLabel>新订单</ToolLabel></WideToolButton>
        <Tool name="book" label="编辑器" />
        <Tool name="cloud" label="云" />
        <Tool name="signal" label="信号" />
        <WideToolButton type="button">{icons.auto}<ToolLabel>自动交易</ToolLabel></WideToolButton>
      </ToolGroup>
      <ToolGroup>
        <Grip />
        <Tool name="barChart" label="柱状图" />
        <Tool name="candles" label="阴阳烛" pressed />
        <Tool name="lineChart" label="折线图" />
        <ToolSeparator />
        <Tool name="zoomIn" label="放大" />
        <Tool name="zoomOut" label="缩小" />
        <Tool name="tiles" label="平铺" />
        <ToolSeparator />
        <Tool name="autoScroll" label="自动滚动" pressed />
        <Tool name="shift" label="图表平移" />
        <ToolSeparator />
        <SplitTool name="indicators" label="技术指标" />
        <SplitTool name="clock" label="时间周期" />
        <SplitTool name="templates" label="模板" />
      </ToolGroup>
    </ToolRow>
    <ToolRow>
      <ToolGroup $flat>
        <Grip />
        <Tool name="cursor" label="光标" pressed />
        <Tool name="cross" label="十字准线" />
        <ToolSeparator />
        <Tool name="vline" label="垂直线" />
        <Tool name="hline" label="水平线" />
        <Tool name="trend" label="趋势线" />
        <Tool name="channel" label="等距通道" />
        <Tool name="fibo" label="斐波那契" />
        <LetterTool type="button">A</LetterTool>
        <Tool name="labelTool" label="文字标签" />
        <SplitTool name="shapes" label="箭头" />
      </ToolGroup>
      <ToolGroup $flat>
        <Grip />
        {['M1', 'M5', 'M15', 'M30', 'H1', 'H4', 'D1', 'W1', 'MN'].map(t => (
          <Timeframe key={t} type="button" aria-pressed={t === 'M5'} $pressed={t === 'M5'}>{t}</Timeframe>
        ))}
      </ToolGroup>
    </ToolRow>
    <Corner>
      <button type="button" aria-label="搜索">{icons.search}</button>
      <AlertButton type="button">
        <svg width="18" height="22" viewBox="0 0 18 22" aria-hidden="true"><path d="M5 19c-8-4-3-12 5-11s8 10 0 10l-4 2z" fill="#e4e7ee" stroke="#a9afbd" /></svg>
        <AlertBadge>1</AlertBadge>
      </AlertButton>
    </Corner>
  </ToolbarArea>
);

const MarketWatch = () => (
  <Dock>
    <DockHeader>
      <DockTitle>市场报价: 00:33:21</DockTitle>
      <CloseButton type="button" aria-label="关闭"><SmallX /></CloseButton>
    </DockHeader>
    <DockBody>
      <Quotes>
        <colgroup><col width="76" /><col width="51" /><col /></colgroup>
        <thead>
          <tr><QuoteHead>交易品种</QuoteHead><QuoteHead $right>卖价</QuoteHead><QuoteHead $right>买价</QuoteHead></tr>
        </thead>
        <tbody>
          {QUOTES.map(q => (
            <tr key={q.name}>
              <QuoteCell $tone={q.muted ? '#a0a0a0' : '#000'}><SymbolName><Arrow up={q.up} />{q.name}</SymbolName></QuoteCell>
              <QuoteCell $tone={q.tone}>{q.bid}</QuoteCell>
              <QuoteCell $tone={q.tone}>{q.ask}</QuoteCell>
            </tr>
          ))}
        </tbody>
      </Quotes>
    </DockBody>
    <TabStrip $inset>
      <Tab type="button" $active>交易品种</Tab>
      <Tab type="button">即时图</Tab>
    </TabStrip>
  </Dock>
);

const Chart = () => (
  <ChartWindow>
    <Plots>
      <Pane $grow={510}>
        <svg viewBox="192 102 1675 510" preserveAspectRatio="none" fill="none" aria-hidden="true">
          <path d="M192 274.500H1867" stroke="#778899" />
          <path d={barsPath} stroke="#00ff00" />
          <polyline points={fastLine} stroke="#008000" />
          <path d={SIGNAL_STEMS.map(([x, y]) => `M${x + 0.5} ${y}V612`).join('')} stroke="#00ffff" />
          <polyline points={toPolyline(SLOW_MA)} stroke="#ff0000" />
          <polyline points={toPolyline(MID_MA)} stroke="#ffff00" />
        </svg>
        <PaneCaption><Triangle />XAUUSD,M5  4512.250 4513.153 4506.561 4509.348</PaneCaption>
        <Note $x={441} $y={355} $tone="#32cd32">← Main Distribution</Note>
        <Note $x={436} $y={493} $tone="#00ffff">← Main Accumulation</Note>
        <Note $x={1276} $y={129} $tone="#32cd32">← Main Distribution</Note>
        <Note $x={1270} $y={236} $tone="#00ffff">← Main Accumulation</Note>
        <Watermark>www.eazhijia.com@臭宝很深情</Watermark>
      </Pane>
      <Pane $grow={254}>
        <svg viewBox="192 615 1675 254" preserveAspectRatio="none" fill="none" aria-hidden="true">
          <path d={macdPath} fill="#c0c0c0" />
          <polyline points={macdSignal} stroke="#ff0000" />
        </svg>
        <PaneCaption>MACD(12,26,9) -0.1847 1.2444</PaneCaption>
      </Pane>
      <TimeAxis>{TIMES.map(t => <li key={t}>{t}</li>)}</TimeAxis>
    </Plots>
    <ValueAxis>
      <PriceList>{PRICES.map(p => <li key={p}>{p}</li>)}</PriceList>
      <MacdList><li>30.1837</li><li>0.00</li><li>-25.1962</li></MacdList>
      <LastPrice>4509.348</LastPrice>
    </ValueAxis>
  </ChartWindow>
);

const TerminalPanel = () => (
  <Terminal>
    <TerminalGutter>
      <CloseButton type="button" aria-label="关闭"><SmallX /></CloseButton>
      <GutterTitle>终端</GutterTitle>
    </TerminalGutter>
    <TerminalBody>
      <Articles>
        <ArticleTable>
          <colgroup><col /><col width="585" /><col width="80" /></colgroup>
          <thead>
            <tr>
              <th>名称</th>
              <th>类别</th>
              <th>日期<SortMark><svg width="8" height="8" viewBox="0 0 8 8" fill="none" aria-hidden="true"><path d="M7 .5H.5L4 7.500" stroke="#888" /></svg></SortMark></th>
            </tr>
          </thead>
        </ArticleTable>
      </Articles>
      <TabStrip>
        {TERMINAL_TABS.map(t => (
          <Tab key={t.name} type="button" $active={t.active}>{t.name}{t.count && <Counter>{t.count}</Counter>}</Tab>
        ))}
      </TabStrip>
    </TerminalBody>
  </Terminal>
);

export default function App() {
  return (
    <Shell>
      <GlobalStyle />
      <TitleBar>
        <Brand aria-hidden="true">exness</Brand>
        <Title>47007453: Exness-Real14 - Exness Technologies Ltd - [XAUUSD,M5]</Title>
        <WindowButton type="button" aria-label="最小化"><svg width="10" height="10"><path d="M0 5.500h10" stroke="#000" /></svg></WindowButton>
        <WindowButton type="button" aria-label="最大化"><svg width="10" height="10"><path d="M.5 .5h9v9h-9z" fill="none" stroke="#000" /></svg></WindowButton>
        <WindowButton type="button" aria-label="关闭窗口"><SmallX size={13} w={0.7} /></WindowButton>
      </TitleBar>
      <MenuBar>
        {icons.doc}
        {MENUS.map(([name, key]) => <MenuItem key={key} type="button">{name}(<u>{key}</u>)</MenuItem>)}
        <Spacer />
        <MdiButton type="button" aria-label="最小化图表"><svg width="8" height="8"><path d="M1 7h6" stroke="#708090" strokeWidth="2" /></svg></MdiButton>
        <MdiButton type="button" aria-label="还原图表"><svg width="9" height="9" fill="none"><path d="M3 3V1h5v4H6M1 4h5v4H1z" stroke="#708090" strokeWidth="1.300" /></svg></MdiButton>
        <MdiButton type="button" aria-label="关闭图表"><svg width="8" height="8"><path d="M1 1l6 6M7 1l-6 6" stroke="#708090" strokeWidth="2" /></svg></MdiButton>
      </MenuBar>
      <Toolbars />
      <Workspace>
        <MarketWatch />
        <Chart />
      </Workspace>
      <TerminalPanel />
      <StatusBar>
        <span>寻求帮助,请按F1键</span>
        <Spacer />
        <StatusCell $w={135}>Default</StatusCell>
        <StatusCell $w={117} />
        <StatusCell $w={82} />
        <StatusCell $w={81} />
        <StatusCell $w={79} />
        <StatusCell $w={80} />
        <StatusCell $w={78} />
        <StatusCell $w={128}>
          <svg width="24" height="14" aria-hidden="true">
            {[0, 1, 2, 3, 4, 5, 6, 7].map(i => (
              <g key={i}><rect x={i * 3} y="0" width="2" height={9 - i} fill="#5f7a10" /><rect x={i * 3} y={10 - i} width="2" height={4 + i} fill="#0d3f66" /></g>
            ))}
          </svg>
          750/9 kb
        </StatusCell>
        <svg width="16" height="18" aria-hidden="true"><path d="M2 18L16 2M7 18l9-10M12 18l4-5" stroke="#999" strokeWidth="1.500" /></svg>
      </StatusBar>
    </Shell>
  );
}
